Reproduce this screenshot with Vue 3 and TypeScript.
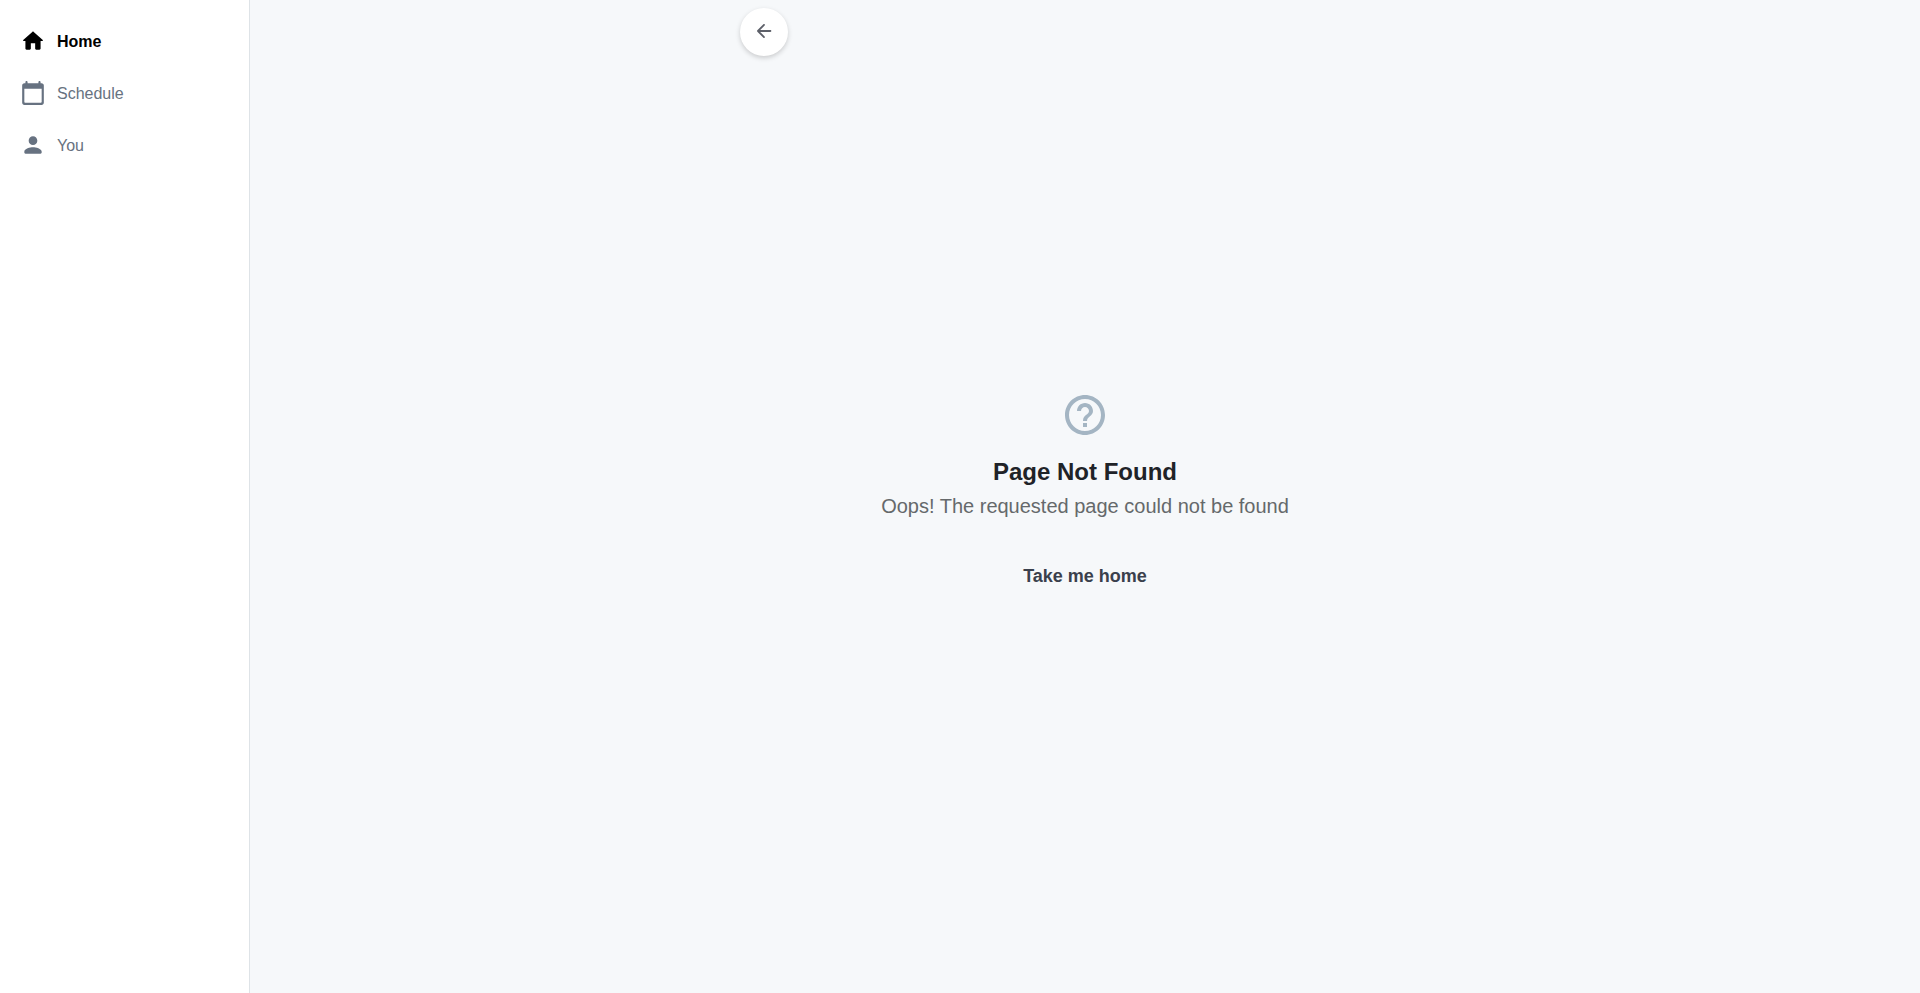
<script setup lang="ts">
import { ref } from 'vue'

interface NavItem {
  label: string
  href: string
  icon: string
}

const items: NavItem[] = [
  {
    label: 'Home',
    href: '#home',
    icon: 'M10 19v-5h4v5c0 .55.45 1 1 1h3c.55 0 1-.45 1-1v-7h1.7c.46 0 .68-.57.33-.87L12.67 3.6c-.38-.34-.96-.34-1.34 0l-8.36 7.53c-.34.3-.13.87.33.87H5v7c0 .55.45 1 1 1h3c.55 0 1-.45 1-1z',
  },
  {
    label: 'Schedule',
    href: '#schedule',
    icon: 'M20 3h-1V2c0-.55-.45-1-1-1s-1 .45-1 1v1H7V2c0-.55-.45-1-1-1s-1 .45-1 1v1H4c-1.1 0-2 .9-2 2v16c0 1.1.9 2 2 2h16c1.1 0 2-.9 2-2V5c0-1.1-.9-2-2-2zm-1 18H5c-.55 0-1-.45-1-1V8h16v12c0 .55-.45 1-1 1z',
  },
  {
    label: 'You',
    href: '#you',
    icon: 'M12 12c2.21 0 4-1.79 4-4s-1.79-4-4-4-4 1.79-4 4 1.79 4 4 4zm0 2c-2.67 0-8 1.34-8 4v1c0 .55.45 1 1 1h14c.55 0 1-.45 1-1v-1c0-2.66-5.33-4-8-4z',
  },
]

const active = ref('Home')

function goBack(): void {
  window.history.back()
}
</script>

<template>
  <div class="layout">
    <nav class="sidebar" aria-label="Main">
      <a
        v-for="item in items"
        :key="item.label"
        :href="item.href"
        class="nav-item"
        :class="{ active: item.label === active }"
        :aria-current="item.label === active ? 'page' : undefined"
        @click="active = item.label"
      >
        <svg class="nav-icon" viewBox="0 0 24 24" aria-hidden="true">
          <path :d="item.icon" />
        </svg>
        <span>{{ item.label }}</span>
      </a>
    </nav>

    <main class="main">
      <header class="toolbar">
        <button class="back" type="button" aria-label="Go back" @click="goBack">
          <svg class="back-icon" viewBox="0 0 24 24" aria-hidden="true">
            <path
              d="M19 11H7.83l4.88-4.88c.39-.39.39-1.03 0-1.42-.39-.39-1.02-.39-1.41 0l-6.59 6.59c-.39.39-.39 1.02 0 1.41l6.59 6.59c.39.39 1.02.39 1.41 0 .39-.39.39-1.02 0-1.41L7.83 13H19c.55 0 1-.45 1-1s-.45-1-1-1z"
            />
          </svg>
        </button>
      </header>

      <section class="empty">
        <svg class="help-icon" viewBox="0 0 24 24" aria-hidden="true">
          <path
            d="M11 18h2v-2h-2v2zm1-16C6.48 2 2 6.48 2 12s4.48 10 10 10 10-4.48 10-10S17.52 2 12 2zm0 18c-4.41 0-8-3.59-8-8s3.59-8 8-8 8 3.59 8 8-3.59 8-8 8zm0-14c-2.21 0-4 1.79-4 4h2c0-1.1.9-2 2-2s2 .9 2 2c0 2-3 1.75-3 5h2c0-2.25 3-2.5 3-5 0-2.21-1.79-4-4-4z"
          />
        </svg>
        <h1 class="title">Page Not Found</h1>
        <p class="message">Oops! The requested page could not be found</p>
        <button class="home-button" type="button" @click="active = 'Home'">Take me home</button>
      </section>
    </main>
  </div>
</template>

<style>
body {
  margin: 0;
}
</style>

<style scoped>
.layout {
  display: flex;
  min-height: 100vh;
  background: #f6f8fa;
  font-family: "Liberation Sans", Arial, sans-serif;
}

.sidebar {
  display: flex;
  flex: 0 0 250px;
  flex-direction: column;
  gap: 8px;
  box-sizing: border-box;
  padding: 19px 8px;
  border-right: 1px solid #dee3e7;
  background: #fff;
}

.nav-item {
  display: flex;
  align-items: center;
  gap: 11px;
  height: 44px;
  padding: 0 12px;
  border-radius: 8px;
  color: #677281;
  font-size: 16px;
  line-height: 21px;
  text-decoration: none;
}

.nav-item.active {
  color: #000;
  font-weight: 700;
}

.nav-icon {
  width: 26px;
  height: 26px;
  fill: currentColor;
}

.main {
  position: relative;
  display: flex;
  flex: 1;
  flex-direction: column;
}

.toolbar {
  position: absolute;
  top: 0;
  right: 0;
  left: 0;
  box-sizing: border-box;
  width: 100%;
  max-width: 706px;
  margin: 0 auto;
  padding: 8px;
}

.back {
  display: flex;
  align-items: center;
  justify-content: center;
  width: 48px;
  height: 48px;
  padding: 0 0 2px;
  border: 0;
  border-radius: 50%;
  background: #fff;
  box-shadow: 0 2px 5px rgba(0, 0, 0, 0.18);
  color: #5d6069;
  cursor: pointer;
}

.back-icon {
  width: 22px;
  height: 22px;
  fill: currentColor;
}

.empty {
  display: flex;
  flex: 1;
  flex-direction: column;
  align-items: center;
  justify-content: center;
  text-align: center;
}

.help-icon {
  width: 48px;
  height: 48px;
  margin-bottom: 17px;
  fill: #a4b5c3;
}

.title {
  margin: 0 0 4px;
  color: #1f2328;
  font-size: 24px;
  font-weight: 700;
  line-height: 32px;
}

.message {
  margin: 0 0 31px;
  color: #65696b;
  font-size: 20px;
  line-height: 28px;
}

.home-button {
  height: 52px;
  padding: 0 24px;
  border: 0;
  border-radius: 26px;
  background: transparent;
  color: #3a404c;
  font-family: inherit;
  font-size: 18px;
  font-weight: 700;
  cursor: pointer;
}
</style>
